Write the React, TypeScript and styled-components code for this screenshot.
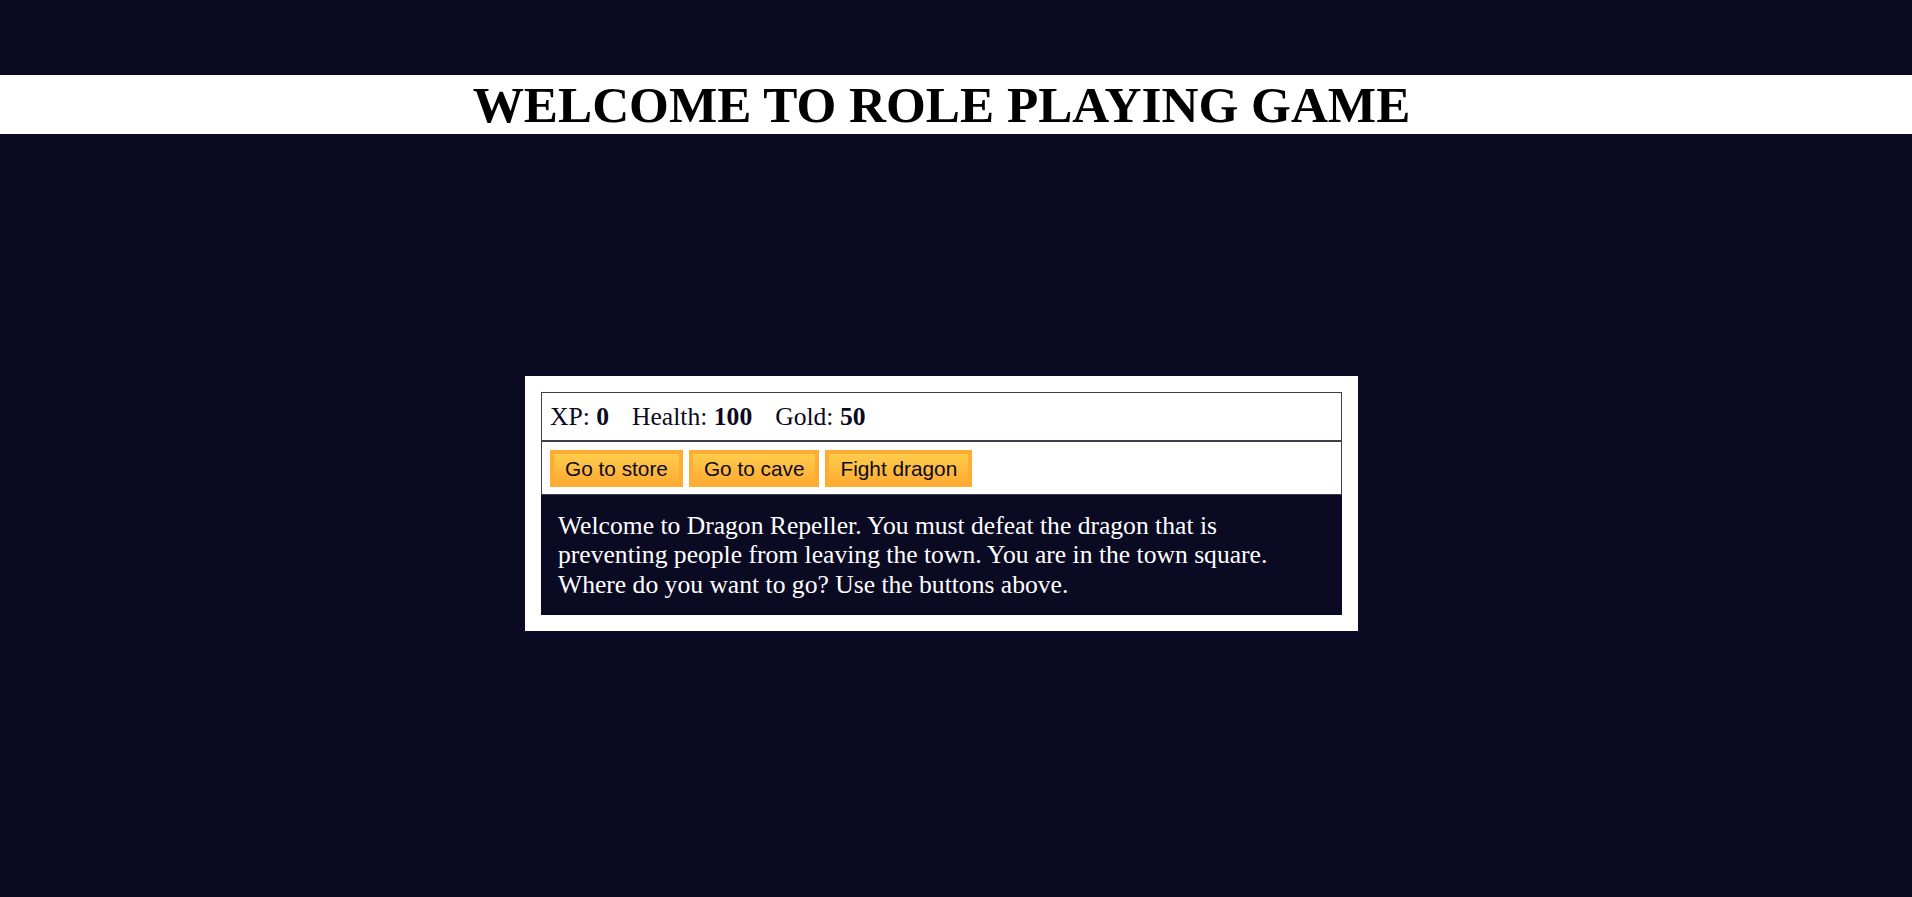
import { FC } from 'react';
import styled, { createGlobalStyle } from 'styled-components';

const GlobalStyle = createGlobalStyle`
  html, body {
    margin: 0;
    padding: 0;
    background-color: #0a0a23;
  }
  body {
    font-family: "Liberation Serif", "Times New Roman", serif;
    min-height: 897px;
  }
`;

interface Stat {
  label: string;
  value: number;
}

const stats: Stat[] = [
  { label: 'XP', value: 0 },
  { label: 'Health', value: 100 },
  { label: 'Gold', value: 50 },
];

const actions = ['Go to store', 'Go to cave', 'Fight dragon'];

const App: FC = () => (
  <>
    <GlobalStyle />
    <Title>WELCOME TO ROLE PLAYING GAME</Title>
    <Main>
      <Game>
        <Stats>
          {stats.map((s) => (
            <StatItem key={s.label}>
              {s.label}: <strong>{s.value}</strong>
            </StatItem>
          ))}
        </Stats>
        <Controls>
          {actions.map((a) => (
            <ActionButton key={a} type="button">{a}</ActionButton>
          ))}
        </Controls>
        <Text>
          Welcome to Dragon Repeller. You must defeat the dragon that is preventing people from leaving the
          town. You are in the town square. Where do you want to go? Use the buttons above.
        </Text>
      </Game>
    </Main>
  </>
);

const Title = styled.h1`
  margin: 75px 0 0;
  padding: 0 29px 0 0;
  background-color: #ffffff;
  color: #000000;
  font-family: "Liberation Serif", "Times New Roman", serif;
  font-size: 51.2px;
  font-weight: 700;
  line-height: 59px;
  text-align: center;
`;

const Main = styled.main`
  display: flex;
  justify-content: center;
  padding: 242px 29px 0 0;
`;

const Game = styled.div`
  width: 801px;
  padding: 16px;
  background-color: #ffffff;
  display: flex;
  flex-direction: column;
`;

const Stats = styled.div`
  border: 1px solid #3e3e52;
  padding: 10px 8px 9px;
  color: #0a0a23;
  font-size: 25.6px;
  line-height: 28px;
`;

const StatItem = styled.span`
  padding-right: 23px;
`;

const Controls = styled.div`
  border: 1px solid #3e3e52;
  padding: 8px 8px 7px;
  display: flex;
  gap: 6px;
`;

const ActionButton = styled.button`
  cursor: pointer;
  margin: 0;
  padding: 2px 11px;
  color: #0a0a23;
  font-family: "Liberation Sans", Arial, sans-serif;
  font-size: 20.8px;
  line-height: 25px;
  background-color: #feac32;
  background-image: linear-gradient(#fecc4c, #ffac33);
  border: 4px solid #feac32;
  border-radius: 0;
`;

const Text = styled.div`
  background-color: #0a0a23;
  color: #ffffff;
  padding: 16px 40px 16px 17px;
  font-size: 25.6px;
  line-height: 29.4px;
`;

export default App;
